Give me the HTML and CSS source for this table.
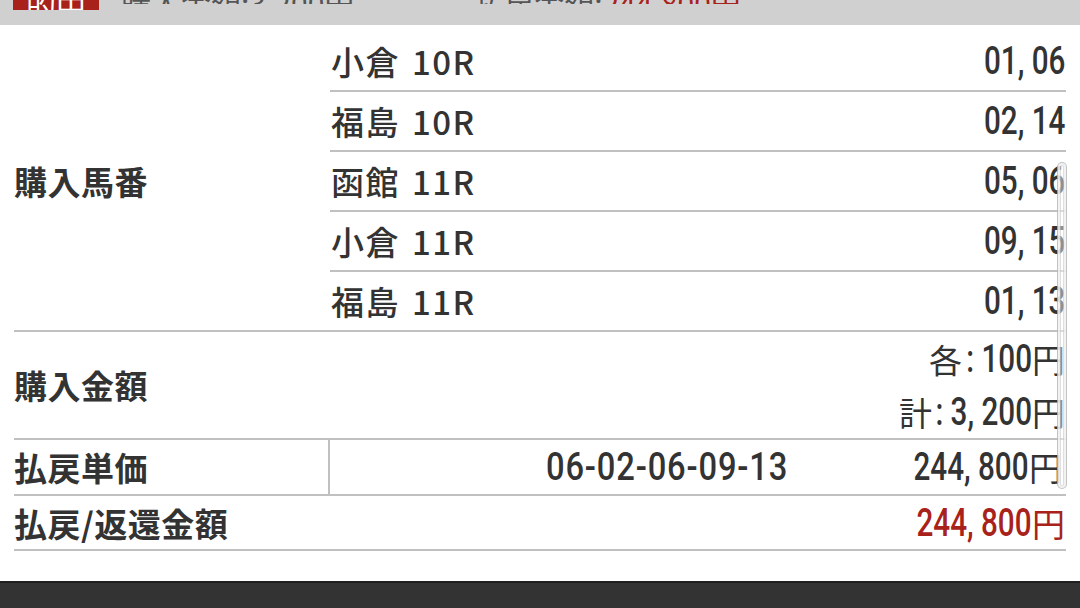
FILE: index.html
```html
<!DOCTYPE html>
<html lang="ja">
<head>
<meta charset="utf-8">
<link rel="stylesheet" href="styles.css">
</head>
<body>
<div class="page">
  <header class="topbar">
    <div class="topbar-inner">
      <span class="badge">的中</span>
      <span class="summary">購入金額:3,200円</span>
      <span class="summary">払戻金額:<em class="red">244,800円</em></span>
    </div>
  </header>

  <div class="table">
    <section class="row row-bets">
      <div class="label">購入馬番</div>
      <div class="subtable">
        <div class="subrow"><span class="race">小倉<span class="gap"></span>10R</span><span class="num">01, 06</span></div>
        <div class="subrow"><span class="race">福島<span class="gap"></span>10R</span><span class="num">02, 14</span></div>
        <div class="subrow"><span class="race">函館<span class="gap"></span>11R</span><span class="num">05, 06</span></div>
        <div class="subrow"><span class="race">小倉<span class="gap"></span>11R</span><span class="num">09, 15</span></div>
        <div class="subrow"><span class="race">福島<span class="gap"></span>11R</span><span class="num">01, 13</span></div>
      </div>
    </section>

    <section class="row row-amount">
      <div class="label">購入金額</div>
      <div class="amounts">
        <div class="amount-line">各<span class="num num-fit num-each"> : 100</span>円</div>
        <div class="amount-line">計<span class="num num-fit num-total"> : 3, 200</span>円</div>
      </div>
    </section>

    <section class="row row-unit">
      <div class="label label-divided">払戻単価</div>
      <div class="unit-cells">
        <span class="num combo">06-02-06-09-13</span>
        <span class="unit-amount"><span class="num">244, 800</span>円</span>
      </div>
    </section>

    <section class="row row-total">
      <div class="label">払戻/返還金額</div>
      <div class="total red"><span class="num">244, 800</span>円</div>
    </section>
  </div>

  <div class="spacer"></div>
  <footer class="footer"></footer>

  <div class="scroll-indicator"></div>
</div>
</body>
</html>
```

FILE: styles.css
```css
* { box-sizing: border-box; }

html, body {
  margin: 0;
  padding: 0;
  background: #ffffff;
}

body {
  width: 1080px;
  height: 608px;
  overflow: hidden;
  font-family: "Noto Sans CJK JP", "Noto Sans", sans-serif;
  color: #333333;
}

.page {
  position: relative;
  width: 1080px;
  height: 608px;
  display: flex;
  flex-direction: column;
}

.topbar {
  height: 25px;
  background: #d0d0d0;
  overflow: hidden;
  flex: none;
}

.topbar-inner {
  display: flex;
  align-items: flex-start;
  height: 10px;
  padding-left: 13px;
  font-size: 30px;
  color: #555555;
}

.badge {
  width: 86px;
  height: 10px;
  background: #a8221b;
  color: #ffffff;
  display: flex;
  align-items: flex-end;
  justify-content: center;
  line-height: 10px;
  overflow: hidden;
}

.summary {
  height: 4px;
  line-height: 4px;
  overflow: hidden;
  display: flex;
  align-items: flex-end;
  margin-left: 22px;
}

.summary + .summary { margin-left: 120px; }

.red { color: #a8221b; font-style: normal; }

.table {
  margin: 7px 14px 0 14px;
  display: flex;
  flex-direction: column;
}

.row {
  display: flex;
  border-bottom: 2px solid #c0c0c0;
}

.label {
  width: 316px;
  flex: none;
  display: flex;
  align-items: center;
  font-size: 33px;
  font-weight: 700;
  color: #333333;
  letter-spacing: 0.5px;
}

.label-divided {
  border-right: 2px solid #c0c0c0;
}

.num {
  display: inline-block;
  font-family: "Roboto", "Liberation Sans", sans-serif;
  font-size: 38px;
  font-weight: 500;
  white-space: pre;
  transform: scaleX(0.78);
  transform-origin: right center;
}

.num-fit {
  display: inline-flex;
  justify-content: flex-end;
  flex: none;
}

.num-each { width: 70px; }
.num-total { width: 100px; }

.subtable {
  flex: 1;
  display: flex;
  flex-direction: column;
}

.subrow {
  height: 60px;
  display: flex;
  align-items: center;
  justify-content: space-between;
  font-size: 33px;
  border-bottom: 2px solid #c0c0c0;
  padding-right: 1px;
}

.subrow:last-child { border-bottom: none; height: 58px; }

.race {
  padding-left: 1px;
  font-weight: 500;
  letter-spacing: 1.5px;
  display: flex;
  align-items: center;
}

.gap { width: 12px; }

.row-amount .amounts {
  flex: 1;
  display: flex;
  flex-direction: column;
  align-items: flex-end;
  padding: 0 1px 0 0;
  font-size: 33px;
}

.amount-line {
  height: 53px;
  display: flex;
  align-items: center;
}

.unit-cells {
  flex: 1;
  height: 54px;
  display: flex;
  align-items: center;
  font-size: 33px;
  padding-right: 4px;
}

.combo {
  margin-left: 216px;
  letter-spacing: 1px;
  transform: scaleX(0.86);
  transform-origin: left center;
}

.unit-amount {
  margin-left: auto;
  display: flex;
  align-items: center;
}

.row-total {
  height: 55px;
  align-items: center;
}

.total {
  margin-left: auto;
  font-size: 33px;
  padding-right: 1px;
  display: flex;
  align-items: center;
}

.spacer { flex: 1; }

.footer {
  height: 27px;
  flex: none;
  background: #333333;
  border-top: 2px solid #1f1f1f;
}

.scroll-indicator {
  position: absolute;
  left: 1057px;
  top: 162px;
  width: 10px;
  height: 327px;
  border: 1px solid rgba(170, 170, 170, 0.7);
  border-radius: 5px;
  background: rgba(255, 255, 255, 0.45);
  box-shadow: inset 0 0 0 2px rgba(255, 255, 255, 0.6), inset 0 0 0 3px rgba(190, 190, 190, 0.5);
}
```
